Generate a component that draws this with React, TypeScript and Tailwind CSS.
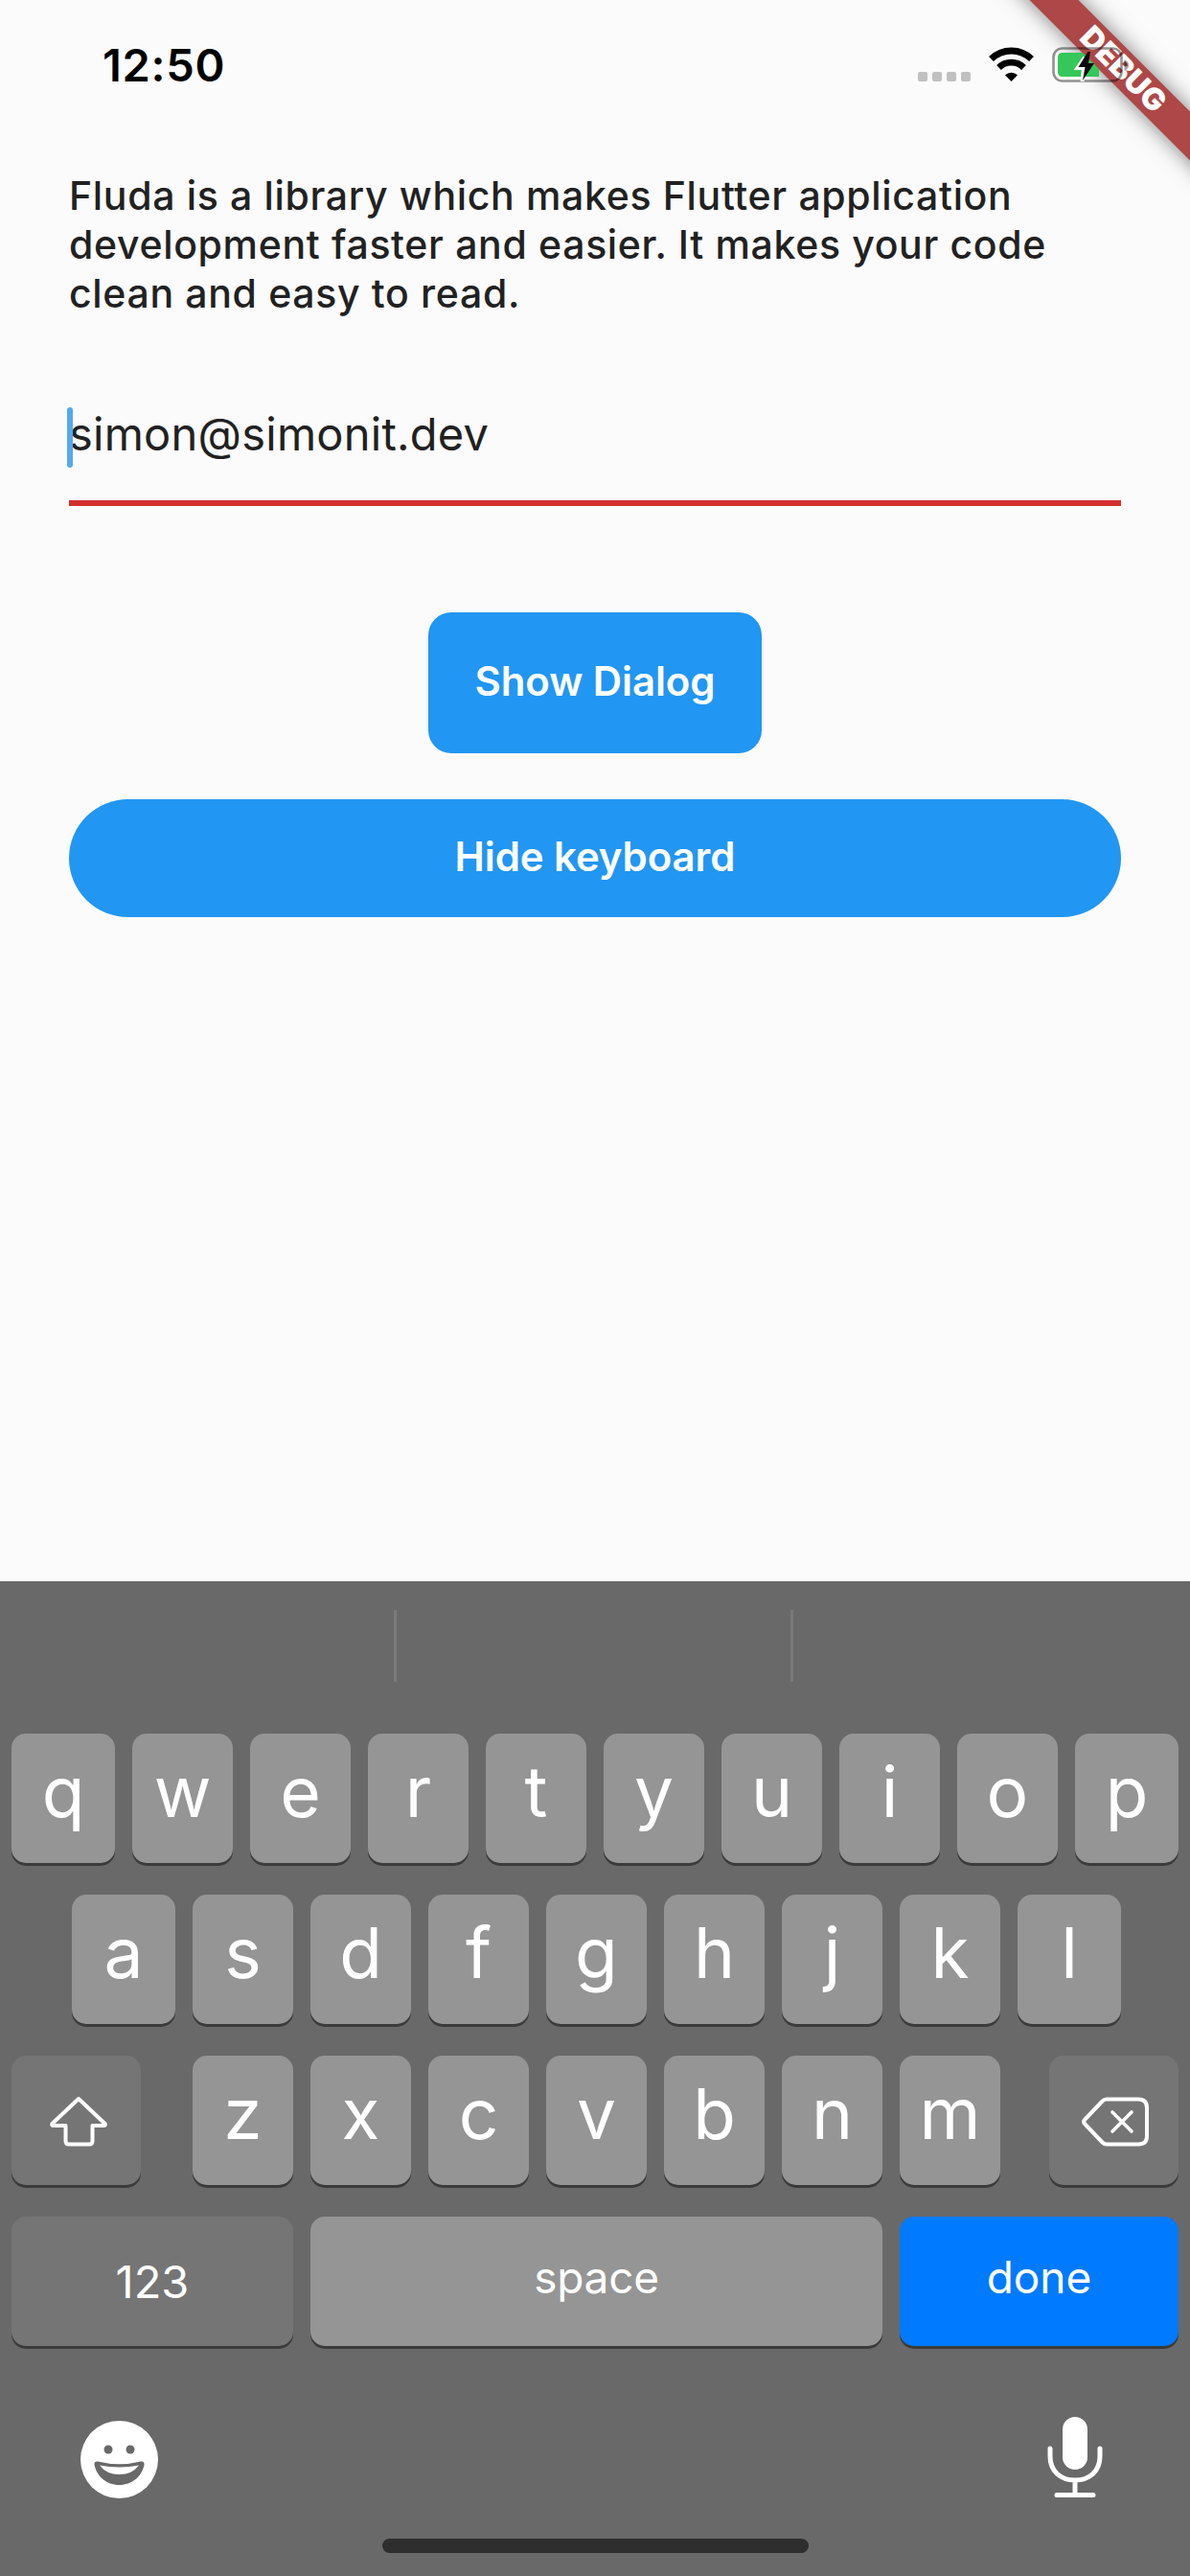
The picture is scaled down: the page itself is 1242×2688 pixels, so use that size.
import React from "react";

type Tone = "light" | "dark" | "blue";

const tones: Record<Tone, string> = {
  light: "bg-[#959595]",
  dark: "bg-[#757575]",
  blue: "bg-[#007aff]",
};

function Key({ tone = "light", width, children }: { tone?: Tone; width: string; children?: React.ReactNode }) {
  return (
    <div
      className={`flex h-[135px] shrink-0 items-center justify-center rounded-[15px] text-white shadow-[0_3px_0_#3b3b3b] ${tones[tone]} ${width}`}
    >
      {children}
    </div>
  );
}

function Letter({ char, width = "w-[105px]" }: { char: string; width?: string }) {
  return (
    <Key width={width}>
      <span className="pb-[14px] text-[73px] leading-none font-[370]">{char}</span>
    </Key>
  );
}

function StatusBar() {
  return (
    <header className="relative z-10 flex h-[132px] shrink-0 justify-between">
      <span className="mt-[39px] ml-[107px] text-[47px] leading-[58px] font-semibold tracking-[0.7px] text-black">
        12:50
      </span>
      <div className="flex">
        <div className="mt-[75px] flex h-[10px] gap-[5px]">
          <i className="size-[10px] rounded-[2px] bg-[#c0c0c0]" />
          <i className="size-[10px] rounded-[2px] bg-[#c0c0c0]" />
          <i className="size-[10px] rounded-[2px] bg-[#c0c0c0]" />
          <i className="size-[10px] rounded-[2px] bg-[#c0c0c0]" />
        </div>
        <svg className="mt-[49px] ml-[19px] h-[37px] w-[47px]" viewBox="0 0 47 37">
          <path d="M2.500 12.500 A30 30 0 0 1 44.500 12.500" fill="none" stroke="#000" strokeWidth="7" />
          <path d="M10.500 21.500 A18.500 18.500 0 0 1 36.500 21.500" fill="none" stroke="#000" strokeWidth="6.800" />
          <path d="M23.500 36 L17 29.300 A9.500 9.500 0 0 1 30 29.300 Z" fill="#000" />
        </svg>
        <svg className="mt-[48px] mr-[62px] ml-[19px] h-[40px] w-[82px]" viewBox="0 0 82 40">
          <rect x="1.500" y="2.500" width="71" height="34" rx="9" fill="none" stroke="#000" strokeOpacity="0.42" strokeWidth="2.600" />
          <path d="M11 7 H32 L49 24 V32 H11 Q6 32 6 27 V12 Q6 7 11 7 Z" fill="#34c759" />
          <path d="M75.500 14 q4.500 2 4.500 6 t-4.500 6 z" fill="#000" fillOpacity="0.35" />
          <path d="M34 12 L26.500 23 H33 L31.500 37" fill="none" stroke="#fff" strokeWidth="4" />
          <path d="M37.500 6 L27.500 22 H34.500 L32 36 L44 18 H38 L40 6 Z" fill="#06060f" />
        </svg>
      </div>
    </header>
  );
}

function DebugBanner() {
  return (
    <div className="pointer-events-none absolute top-0 right-0 size-[240px] overflow-hidden">
      <div className="absolute top-[53px] left-[-31px] flex h-[36px] w-[400px] rotate-45 items-center justify-center bg-[#ae4747] shadow-[0_0_22px_rgba(0,0,0,0.5)]">
        <span className="pl-[4px] text-[32px] leading-none font-black text-white">DEBUG</span>
      </div>
    </div>
  );
}

function Keyboard() {
  return (
    <section className="flex h-[1038px] shrink-0 flex-col bg-[#696969] px-[12px]">
      <div className="flex h-[159px] shrink-0 pt-[30px]">
        <div className="h-[75px] w-[402px] border-r-[3px] border-[#7a7a7a]" />
        <div className="h-[75px] w-[414px] border-r-[3px] border-[#7a7a7a]" />
      </div>
      <div className="flex flex-col gap-[33px]">
        <div className="flex gap-[18px]">
          {"qwertyuiop".split("").map((c) => (
            <Letter key={c} char={c} width={c === "q" || c === "p" ? "w-[108px]" : "w-[105px]"} />
          ))}
        </div>
        <div className="flex gap-[18px] pl-[63px]">
          {"asdfghjkl".split("").map((c) => (
            <Letter key={c} char={c} width={c === "a" || c === "l" ? "w-[108px]" : "w-[105px]"} />
          ))}
        </div>
        <div className="flex">
          <Key tone="dark" width="w-[135px]">
            <svg className="mt-[2px] ml-[4px] h-[54px] w-[60px]" viewBox="0 0 60 54">
              <path
                d="M30 3 L57.5 29 Q58.5 31 56 31 H44.5 V47 Q44.5 50.5 41 50.5 H20 Q16.500 50.5 16.500 47 V31 H4 Q1.500 31 2.500 29 Z"
                fill="none"
                stroke="#fff"
                strokeWidth="4"
                strokeLinejoin="round"
              />
            </svg>
          </Key>
          <div className="ml-[54px] flex gap-[18px]">
            {"zxcvbnm".split("").map((c) => (
              <Letter key={c} char={c} />
            ))}
          </div>
          <div className="ml-[51px]">
            <Key tone="dark" width="w-[135px]">
              <svg className="mt-[2px] ml-[3px] h-[54px] w-[72px]" viewBox="0 0 72 54">
                <path
                  d="M27 3.500 H60 Q69 3.500 69 12.500 V42 Q69 50.500 60 50.500 H27 Q24.500 50.500 22.500 48.500 L4 29 Q2 27 4 25 L22.500 5.500 Q24.500 3.500 27 3.500 Z"
                  fill="none"
                  stroke="#fff"
                  strokeWidth="4"
                  strokeLinejoin="round"
                />
                <path d="M33 17 L53 37 M53 17 L33 37" stroke="#fff" strokeWidth="3.6" strokeLinecap="round" />
              </svg>
            </Key>
          </div>
        </div>
        <div className="flex gap-[18px]">
          <Key tone="dark" width="w-[294px]">
            <span className="text-[47px] leading-none">123</span>
          </Key>
          <Key width="w-[597px]">
            <span className="pb-[10px] text-[46px] leading-none tracking-[-0.3px]">space</span>
          </Key>
          <Key tone="blue" width="w-[291px]">
            <span className="pb-[10px] text-[46px] leading-none">done</span>
          </Key>
        </div>
      </div>
      <div className="mt-[72px] flex justify-between pr-[79px] pl-[72px]">
        <svg className="mt-[6px] size-[81px]" viewBox="0 0 81 81">
          <circle cx="40.500" cy="40.500" r="40.500" fill="#fff" />
          <circle cx="29" cy="30" r="4.500" fill="#696969" />
          <circle cx="52" cy="30" r="4.500" fill="#696969" />
          <path d="M18 42.500 Q40.500 48 63 42.500 Q67 42 66.500 46 C64 58 54 67 40.500 67 C27 67 17 58 14.500 46 Q14 42 18 42.500 Z" fill="#696969" />
          <path d="M20 46.500 Q40.500 50.500 61 46.500 Q54 56 40.500 56 Q27 56 20 46.500 Z" fill="#fff" />
        </svg>
        <svg className="mt-[1px] h-[87px] w-[58px]" viewBox="0 0 58 87">
          <rect x="16" y="1" width="26" height="55" rx="13" fill="#fff" />
          <path d="M3 34 V42 C3 58 14 67 29 67 S55 58 55 42 V34 M29 67 V82 M10 82.500 H48" fill="none" stroke="#fff" strokeWidth="5" strokeLinecap="round" />
        </svg>
      </div>
      <div className="mt-[41px] h-[15px] w-[445px] self-center rounded-full bg-[#2e2e2e]" />
    </section>
  );
}

export default function App() {
  return (
    <div className="relative flex h-[2688px] w-[1242px] flex-col overflow-hidden bg-[#fbfbfb] font-['Inter',sans-serif]">
      <StatusBar />
      <main className="flex flex-1 flex-col items-center px-[72px] pt-[47px] text-[#212121]">
        <p className="w-full text-[41px] leading-[51px] font-[460] tracking-[0.66px] whitespace-nowrap">
          Fluda is a library which makes Flutter application
          <br />
          development faster and easier. It makes your code
          <br />
          clean and easy to read.
        </p>
        <div className="relative mt-[80px] flex h-[116px] w-full border-b-[6px] border-[#d32f2f] pt-[12px]">
          <div className="absolute top-[13px] left-[-2px] h-[63px] w-[6px] rounded-full bg-[#56a9ee]" />
          <span className="text-[47px] leading-[58px] font-[370] tracking-[0.25px]">simon@simonit.dev</span>
        </div>
        <button className="mt-[111px] h-[147px] w-[348px] rounded-[24px] bg-[#2196f3] pb-[4px] text-[42px] font-[560] tracking-[-0.1px] text-white">
          Show Dialog
        </button>
        <button className="mt-[48px] h-[123px] w-full rounded-full bg-[#2196f3] pb-[4px] text-[42px] font-[560] tracking-[-0.1px] text-white">
          Hide keyboard
        </button>
      </main>
      <Keyboard />
      <DebugBanner />
    </div>
  );
}
